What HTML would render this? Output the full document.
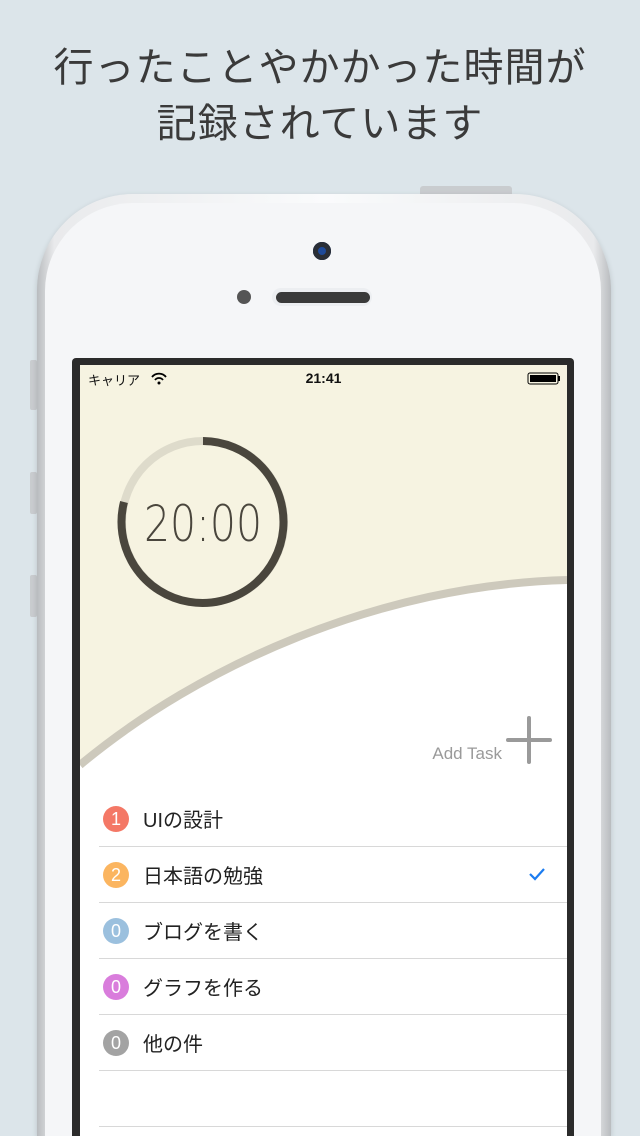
<!DOCTYPE html>
<html style="overflow:hidden;height:1136px"><head><meta charset="utf-8"><style>
*{margin:0;padding:0;box-sizing:border-box}
body{width:640px;height:1136px;overflow:hidden;background:#dce5ea;font-family:"Liberation Sans","Noto Sans CJK JP",sans-serif;position:relative}
.title{position:absolute;top:40px;left:0;width:640px;text-align:center;font-size:40px;line-height:56px;color:#3a3a3a;letter-spacing:1px}
.phone{position:absolute;left:37px;top:194px;width:574px;height:942px;border-radius:96px 96px 0 0;background:linear-gradient(90deg,#b9bcbf,#e9eaec 3%,#fafbfc 50%,#e9eaec 97%,#b9bcbf);box-shadow:0 2px 6px rgba(0,0,0,.15)}
.face{position:absolute;left:45px;top:203px;width:556px;height:933px;border-radius:88px 88px 0 0;background:#f5f6f8}
.btn{position:absolute;background:#c9cccf;border-radius:2px}
.bezel{position:absolute;left:72px;top:358px;width:502px;height:778px;background:#2b2b2b;border-radius:4px 4px 0 0}
.screen{position:absolute;left:80px;top:365px;width:487px;height:771px;background:#fff;overflow:hidden}
.row{position:absolute;left:19px;width:468px;height:56px;border-bottom:1px solid #d8d8d8}
.badge{position:absolute;left:4px;top:15px;width:26px;height:26px;border-radius:13px;color:#fff;font-size:18px;text-align:center;line-height:26px}
.lbl{position:absolute;left:44px;top:13px;font-size:20px;color:#222}
</style></head><body>
<div class="title">行ったことやかかった時間が<br>記録されています</div>
<div class="btn" style="left:420px;top:186px;width:92px;height:8px;border-radius:3px 3px 0 0"></div>
<div class="btn" style="left:30px;top:360px;width:7px;height:50px"></div>
<div class="btn" style="left:30px;top:472px;width:7px;height:42px"></div>
<div class="btn" style="left:30px;top:575px;width:7px;height:42px"></div>
<div class="phone"></div>
<div class="face"></div>
<div style="position:absolute;left:313px;top:242px;width:18px;height:18px;border-radius:9px;background:#2a2e36;box-shadow:inset 0 0 0 5px #2a2e36,inset 0 0 0 9px #1e4a9a"></div>
<div style="position:absolute;left:237px;top:290px;width:14px;height:14px;border-radius:7px;background:#555"></div>
<div style="position:absolute;left:272px;top:288px;width:100px;height:18px;border-radius:9px;background:#eceef1"></div>
<div style="position:absolute;left:276px;top:292px;width:94px;height:11px;border-radius:6px;background:#3a3a3a"></div>
<div class="bezel"></div>
<div class="screen">
<svg width="487" height="771" style="position:absolute;left:0;top:0">
<path d="M0 0 H487 V215 C300 220 120 300 0 400 Z" fill="#f6f3e1"/>
<path d="M0 400 C120 300 300 220 487 215" fill="none" stroke="#cdc9bc" stroke-width="8"/>
<circle cx="123" cy="157" r="81" fill="none" stroke="#dedbcb" stroke-width="8"/>
<path d="M123 76 A81 81 0 1 1 44 137" fill="none" stroke="#4a463d" stroke-width="8"/>
<text x="64" y="176" font-size="50" fill="#4a463d" font-family="DejaVu Sans ExtraLight, DejaVu Sans, sans-serif" font-weight="200" textLength="118" lengthAdjust="spacingAndGlyphs">20:00</text>
<line x1="449" y1="353" x2="449" y2="397" stroke="#9a9a9a" stroke-width="4" stroke-linecap="round"/>
<line x1="428" y1="375" x2="470" y2="375" stroke="#9a9a9a" stroke-width="4" stroke-linecap="round"/>
<text x="422" y="394" text-anchor="end" font-size="17" fill="#9a9a9a" font-family="Liberation Sans">Add Task</text>
<path d="M450 509 l5 5 l9 -10" fill="none" stroke="#1b7cf0" stroke-width="2.2"/>
<rect x="448" y="8" width="30" height="11" rx="2" fill="none" stroke="#000" stroke-width="1"/>
<rect x="450" y="10" width="26" height="7" fill="#000"/>
<rect x="478" y="11" width="2" height="5" fill="#000"/>
<path d="M72 12 a9 9 0 0 1 14 0 M75 15 a5 5 0 0 1 8 0" fill="none" stroke="#000" stroke-width="1.8"/>
<circle cx="79" cy="18" r="1.5" fill="#000"/>
</svg>
<div style="position:absolute;left:8px;top:5px;font-size:13px;color:#111">キャリア</div>
<div style="position:absolute;left:0;width:487px;top:5px;text-align:center;font-size:14px;font-weight:bold;color:#111">21:41</div>
<div class="row" style="top:426px"><div class="badge" style="background:#f47866">1</div><div class="lbl">UIの設計</div></div>
<div class="row" style="top:482px"><div class="badge" style="background:#fbb560">2</div><div class="lbl">日本語の勉強</div></div>
<div class="row" style="top:538px"><div class="badge" style="background:#9bc0de">0</div><div class="lbl">ブログを書く</div></div>
<div class="row" style="top:594px"><div class="badge" style="background:#d97ddc">0</div><div class="lbl">グラフを作る</div></div>
<div class="row" style="top:650px"><div class="badge" style="background:#a3a3a3">0</div><div class="lbl">他の件</div></div>
<div class="row" style="top:706px"></div>
</div>
</body></html>
